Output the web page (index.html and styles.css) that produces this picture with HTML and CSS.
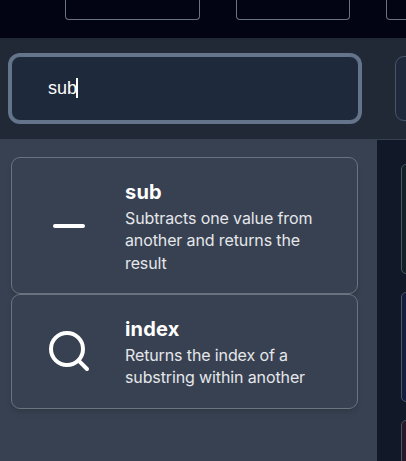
FILE: index.html
```
<!DOCTYPE html>
<html lang="en">
<head>
    <meta charset="UTF-8">
    <meta name="viewport" content="width=device-width, initial-scale=1.0">
    <title>Node search</title>
    <link rel="stylesheet" href="styles.css">
</head>
<body>
    <div class="topbar">
        <div class="slot slot-wide"></div>
        <div class="slot"></div>
        <div class="slot"></div>
    </div>

    <div class="toolbar">
        <div class="search-input" contenteditable="true" role="searchbox"><span>sub</span><span class="caret"></span></div>
        <div class="filter-box"></div>
    </div>

    <div class="content">
        <div class="results">
            <div class="result">
                <svg class="result-icon" viewBox="0 0 24 24">
                    <path d="M5 12h14"/>
                </svg>
                <div class="result-text">
                    <h2>sub</h2>
                    <p>Subtracts one value from another and returns the result</p>
                </div>
            </div>
            <div class="result">
                <svg class="result-icon" viewBox="0 0 24 24">
                    <circle cx="11" cy="11" r="8"/>
                    <path d="m21 21-4.3-4.3"/>
                </svg>
                <div class="result-text">
                    <h2>index</h2>
                    <p>Returns the index of a substring within another</p>
                </div>
            </div>
        </div>

        <div class="board">
            <div class="tile tile-green"></div>
            <div class="tile tile-blue"></div>
            <div class="tile tile-red"></div>
        </div>
    </div>
</body>
</html>
```

FILE: styles.css
```
* {
    box-sizing: border-box;
}
body {
    margin: 0;
    height: 461px;
    overflow: hidden;
    display: flex;
    flex-direction: column;
    font-family: Inter, sans-serif;
    background-color: #111827;
    color: white;
}
.topbar {
    display: flex;
    flex: none;
    gap: 36px;
    height: 38px;
    padding-left: 65px;
    overflow: hidden;
    background-color: #020413;
}
.slot {
    flex: none;
    width: 114px;
    height: 20px;
    border: 1px solid #6b7280;
    border-top: none;
    border-radius: 0 0 4px 4px;
}
.slot-wide {
    width: 135px;
}
.toolbar {
    display: flex;
    flex: none;
    gap: 36px;
    height: 102px;
    padding: 18px 0 0 11px;
    overflow: hidden;
    background-color: #212936;
    border-bottom: 1px solid #374151;
}
.search-input {
    display: flex;
    align-items: center;
    flex: none;
    width: 348px;
    height: 65px;
    padding: 0 36px 2px;
    border: 1px solid #64748b;
    border-radius: 9px;
    outline: none;
    box-shadow: 0 0 0 3px #64748b;
    background-color: #1e293b;
    color: white;
    font-family: "Liberation Sans", Arial, sans-serif;
    font-size: 18px;
    line-height: 20px;
    caret-color: transparent;
}
.caret {
    width: 2px;
    height: 20px;
    margin-left: -1px;
    background-color: white;
}
.filter-box {
    flex: none;
    width: 120px;
    height: 65px;
    border: 1px solid #475569;
    border-radius: 9px;
    background-color: #1e293b;
}
.content {
    display: flex;
    flex: 1;
    min-height: 0;
}
.results {
    flex: none;
    width: 377px;
    padding: 17px 19px 0 11px;
    background-color: #384151;
}
.result {
    display: flex;
    align-items: center;
    gap: 32px;
    padding: 22px 33px 18.6px;
    border: 1px solid #6b7280;
    border-radius: 9px;
    background-color: #384151;
    box-shadow: 0 4px 6px -1px rgba(0,0,0,0.1), 0 2px 4px -2px rgba(0,0,0,0.1);
}
.result:last-child {
    padding-bottom: 19.4px;
}
.result-icon {
    flex: none;
    width: 48px;
    height: 48px;
    margin-bottom: 2px;
    fill: none;
    stroke: white;
    stroke-width: 2;
    stroke-linecap: round;
    stroke-linejoin: round;
}
.result:last-child .result-icon {
    margin-bottom: 3.4px;
}
.result h2 {
    margin: 0 0 2px;
    font-size: 20px;
    line-height: 25px;
    font-weight: 700;
    letter-spacing: 0.2px;
}
.result p {
    margin: 0;
    font-size: 16px;
    line-height: 22.4px;
    letter-spacing: -0.12px;
    color: #e5e7eb;
}
.board {
    display: flex;
    flex: 1;
    flex-direction: column;
    gap: 18px;
    padding: 24px 0 0 24px;
    overflow: hidden;
}
.tile {
    flex: none;
    width: 120px;
    height: 110px;
    border: 1px solid #4b5563;
    border-radius: 5px;
}
.tile-green {
    background-color: #122125;
}
.tile-blue {
    background-color: #141d3f;
}
.tile-red {
    background-color: #2a1829;
}
```
